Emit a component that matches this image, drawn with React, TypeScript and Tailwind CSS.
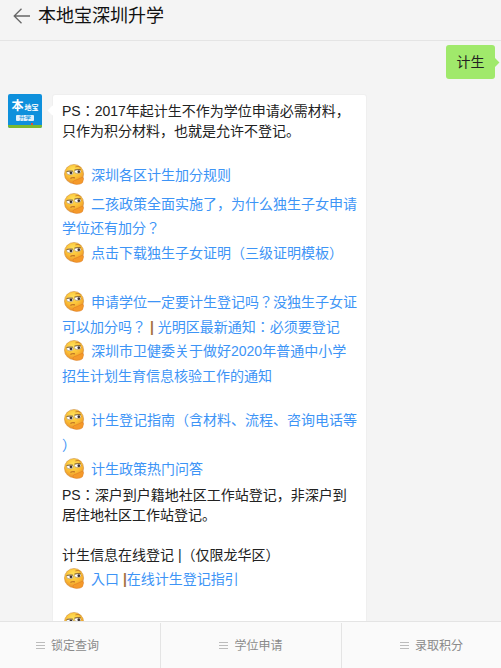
const FONT = '[font-family:"Liberation_Sans","Noto_Sans_CJK_JP",sans-serif]'

// 表情：斜眼托腮
function Emoji() {
  return (
    <svg width="21" height="21" viewBox="0 0 23 23" className="-my-[4px] ml-[2px] mr-[6px] inline-block align-[-1px]">
      <defs>
        <radialGradient id="face" cx="45%" cy="30%" r="75%">
          <stop offset="0%" stopColor="#ffe25a" />
          <stop offset="55%" stopColor="#fbbe34" />
          <stop offset="100%" stopColor="#e8862a" />
        </radialGradient>
      </defs>
      <circle cx="11" cy="11" r="10.5" fill="url(#face)" stroke="#c98a3a" strokeWidth="0.6" />
      <ellipse cx="6.5" cy="9.5" rx="3.6" ry="2.4" fill="#fff" stroke="#8a6a3a" strokeWidth="0.5" />
      <ellipse cx="15" cy="8.2" rx="3.6" ry="2.3" fill="#fff" stroke="#8a6a3a" strokeWidth="0.5" />
      <circle cx="7.6" cy="9.6" r="1.5" fill="#3a3030" />
      <circle cx="16.2" cy="8.4" r="1.5" fill="#3a3030" />
      <path d="M2.8 8.2 L9.8 7.8" stroke="#7a5a2a" strokeWidth="0.9" fill="none" />
      <path d="M11.4 6.6 L18.4 5.8" stroke="#7a5a2a" strokeWidth="0.9" fill="none" />
      <path d="M12.5 3.2 Q15.5 1.8 18 3.6" stroke="#c47a22" strokeWidth="0.9" fill="none" />
      <path d="M7 15.6 Q9.5 14.6 12 15.2" stroke="#a5561f" strokeWidth="1" fill="none" />
      <path d="M10 21.5 Q9 18.2 13 17.6 L19.5 14.8 Q22 14.4 21.4 16.6 L20.8 18.6 Q21 21 17.5 22 Q13 23 10 21.5Z" fill="#f59a2a" stroke="#d9761f" strokeWidth="0.5" />
    </svg>
  )
}

function Logo() {
  return (
    <div className="relative flex h-[34px] w-[34px] shrink-0 flex-col items-center overflow-hidden rounded-[2px] bg-[#0e90dc] text-white">
      <div className="mt-[7px] flex h-[11px] items-end">
        <span className="text-[12px] leading-[11px] font-bold">本</span>
        <span className="ml-[1px] text-[7px] leading-[9px] font-bold">地宝</span>
      </div>
      <div className="mt-[3px] h-[6px] w-[18px] rounded-[1px] bg-[#dff0fb] text-center text-[6px] leading-[6px] text-[#0e90dc]">升学</div>
      <div className="mt-auto h-[3px] w-full bg-[#7cb82f]" />
      <span className="absolute right-[9px] bottom-[3px] h-[2px] w-[2px] bg-[#d9503f]" />
    </div>
  )
}

function TabIcon() {
  return (
    <span className="mr-[6px] flex w-[9px] flex-col gap-[2px]">
      <span className="h-px bg-[#bcbcbc]" />
      <span className="h-px bg-[#bcbcbc]" />
      <span className="h-px bg-[#bcbcbc]" />
    </span>
  )
}

const A = 'text-[#3d94f6] leading-[24.5px]'
const BAR = 'font-bold text-[#a5713f]'

export default function App() {
  return (
    <div className={`flex h-[668px] w-[501px] flex-col overflow-hidden bg-[#f4f4f4] text-[14px] leading-[20px] text-[#222] [text-spacing-trim:space-all] ${FONT}`}>
      {/* 顶栏 */}
      <div className="flex h-[41px] shrink-0 items-center border-b border-[#e4e4e4] pb-[8px] pl-[13px]">
        <svg width="17" height="16" viewBox="0 0 17 16" fill="none" stroke="#666" strokeWidth="1.3">
          <path d="M8.5 0.8 L1.2 8 L8.5 15.2 M1.2 8 H17" />
        </svg>
        <span className="ml-[8px] text-[18px] text-[#111]">本地宝深圳升学</span>
      </div>

      {/* 消息区 */}
      <div className="flex-1 overflow-hidden">
        <div className="mt-[4px] mr-[6px] flex justify-end">
          <div className="relative flex h-[34px] w-[49px] items-center justify-center rounded-[3px] bg-[#a0e96b]">
            计生
            <span className="absolute top-[14px] -right-[3px] h-[7px] w-[7px] rotate-45 bg-[#a0e96b]" />
          </div>
        </div>

        <div className="mt-[15px] ml-[8px] flex">
          <Logo />
          <div className="relative ml-[10px] w-[315px] rounded-[3px] border border-[#efefef] bg-white pt-[6px] pr-[6px] pb-[40px] pl-[9px]">
            <span className="absolute top-[12px] -left-[4px] h-[7px] w-[7px] rotate-45 bg-white" />
            <p>PS：2017年起计生不作为学位申请必需材料，</p>
            <p>只作为积分材料，也就是允许不登记。</p>
            <div className="h-[22px]" />
            <p className={A}><Emoji />深圳各区计生加分规则</p>
            <p className={`${A} mt-[4px]`}><Emoji />二孩政策全面实施了，为什么独生子女申请学位还有加分？</p>
            <p className={A}><Emoji />点击下载独生子女证明（三级证明模板）</p>
            <div className="h-[25px]" />
            <p className={A}><Emoji />申请学位一定要计生登记吗？没独生子女证可以加分吗？<span className={BAR}> | </span>光明区最新通知：必须要登记</p>
            <p className={A}><Emoji />深圳市卫健委关于做好2020年普通中小学招生计划生育信息核验工作的通知</p>
            <div className="h-[20px]" />
            <p className={A}><Emoji />计生登记指南（含材料、流程、咨询电话等<br />）</p>
            <p className={A}><Emoji />计生政策热门问答</p>
            <p className="mt-[3px]">PS：深户到户籍地社区工作站登记，非深户到<br />居住地社区工作站登记。</p>
            <div className="h-[20px]" />
            <p>计生信息在线登记 |（仅限龙华区）</p>
            <p className={`${A} mt-[2px]`}><Emoji />入口 <span className={BAR}>|</span>在线计生登记指引</p>
            <div className="h-[20px]" />
            <p className={A}><Emoji /></p>
          </div>
        </div>
      </div>

      {/* 底部菜单 */}
      <div className="relative z-10 flex h-[47px] shrink-0 border-t border-[#e4e4e4] bg-[#fafafa] pt-[1px] text-[12px] text-[#8a8a8a]">
        <div className="flex w-[160px] items-center justify-center pr-[25px]"><TabIcon />锁定查询</div>
        <div className="flex w-[182px] items-center justify-center border-x border-[#e4e4e4]"><TabIcon />学位申请</div>
        <div className="flex flex-1 items-center justify-center pl-[20px]"><TabIcon />录取积分</div>
      </div>
    </div>
  )
}
